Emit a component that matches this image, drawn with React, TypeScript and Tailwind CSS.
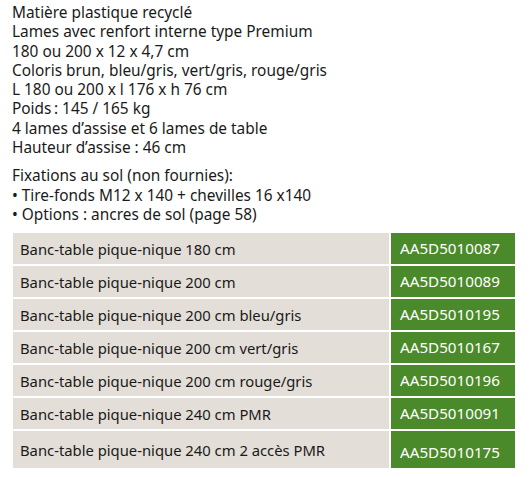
import React from 'react';

const specs = [
  'Matière plastique recyclé',
  'Lames avec renfort interne type Premium',
  '180 ou 200 x 12 x 4,7 cm',
  'Coloris brun, bleu/gris, vert/gris, rouge/gris',
  'L 180 ou 200 x l 176 x h 76 cm',
  'Poids\u202F: 145 / 165 kg',
  '4 lames d’assise et 6 lames de table',
  'Hauteur d’assise : 46 cm',
];

const fixings = [
  'Fixations au sol (non fournies):',
  '• Tire-fonds M12 x 140 + chevilles 16 x140',
  '• Options : ancres de sol (page 58)',
];

const products = [
  { name: 'Banc-table pique-nique 180 cm', ref: 'AA5D5010087' },
  { name: 'Banc-table pique-nique 200 cm', ref: 'AA5D5010089' },
  { name: 'Banc-table pique-nique 200 cm bleu/gris', ref: 'AA5D5010195' },
  { name: 'Banc-table pique-nique 200 cm vert/gris', ref: 'AA5D5010167' },
  { name: 'Banc-table pique-nique 200 cm rouge/gris', ref: 'AA5D5010196' },
  { name: 'Banc-table pique-nique 240 cm PMR', ref: 'AA5D5010091' },
  { name: 'Banc-table pique-nique 240 cm 2 accès PMR', ref: 'AA5D5010175', tall: true },
];

export default function App() {
  return (
    <div className="w-[532px] h-[477px] bg-white text-[#1a1a1a] font-['Noto_Sans',sans-serif] overflow-hidden">
      <div className="pl-[12px] pt-[3px] text-[15.4px] leading-[19.3px]">
        {specs.map((line) => (
          <p key={line}>{line}</p>
        ))}
      </div>
      <div className="pl-[12px] mt-[9px] text-[15.4px] leading-[19.3px]">
        {fixings.map((line) => (
          <p key={line}>{line}</p>
        ))}
      </div>
      <div className="ml-[13px] mt-[9px] w-[502px] flex flex-col gap-[2px] text-[14.8px]">
        {products.map((p) => (
          <div key={p.ref} className={p.tall ? 'flex gap-[2px] h-[37px]' : 'flex gap-[2px] h-[31px]'}>
            <div className="flex-1 bg-[#e3ded8] flex items-center pl-[7px]">{p.name}</div>
            <div
              className={
                p.tall
                  ? 'w-[124px] bg-[#4b8a2a] text-white text-[15.2px] flex items-center pl-[9px] pt-[6px]'
                  : 'w-[124px] bg-[#4b8a2a] text-white text-[15.2px] flex items-center pl-[9px]'
              }
            >
              {p.ref}
            </div>
          </div>
        ))}
      </div>
    </div>
  );
}
